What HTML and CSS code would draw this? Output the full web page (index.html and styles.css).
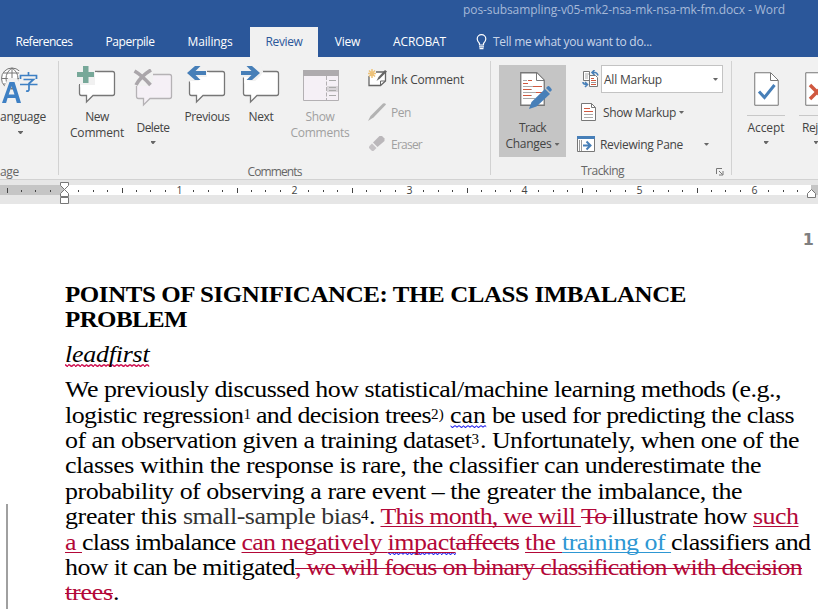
FILE: index.html
```html
<!DOCTYPE html>
<html lang="en">
<head>
<meta charset="utf-8">
<title>Word</title>
<link rel="stylesheet" href="styles.css">
<script src="fit.js" defer></script>
</head>
<body>
<svg class="defs" aria-hidden="true">
  <defs>
    <path id="bubble" d="M4.500 5.500h31q2 0 2 2v20q0 2-2 2h-19.500l-6.500 6.500v-6.500h-5q-2 0-2-2v-20q0-2 2-2z"/>
    <path id="arrow" d="M0 7l8-7h5.500l-5 5h10.500v4h-10.500l5 5h-5.500z"/>
    <path id="sheet" d="M.75.75h16l7.500 7.500v25h-23.500z"/>
  </defs>
</svg>

<header class="top">
  <div class="titlebar"><span data-w="322">pos-subsampling-v05-mk2-nsa-mk-nsa-mk-fm.docx - Word</span></div>
  <nav class="tabs">
    <a class="tab t-ref"><span data-w="57">References</span></a>
    <a class="tab t-pap"><span data-w="49">Paperpile</span></a>
    <a class="tab t-mail"><span data-w="45">Mailings</span></a>
    <a class="tab t-rev active"><span data-w="37">Review</span></a>
    <a class="tab t-view"><span data-w="25.5">View</span></a>
    <a class="tab t-acro"><span data-w="53">ACROBAT</span></a>
    <div class="tell">
      <svg width="11" height="16" viewBox="0 0 11 16" fill="none" stroke="#fff" stroke-width="1.200"><path d="M3.500 11v-1.500C2 8 1.200 7 1.200 5a4.300 4.300 0 0 1 8.600 0c0 2-.8 3-2.300 4.500V11zM3 12.800h5M3.500 14.700h4"/></svg>
      <span data-w="159">Tell me what you want to do...</span>
    </div>
  </nav>
</header>

<section class="ribbon">
  <div class="group g-lang">
    <div class="body">
      <div class="lang">
        <svg width="40" height="40" viewBox="0 0 40 40">
          <g fill="#fff" stroke="#777" stroke-width="1"><circle cx="12" cy="12.500" r="10.500"/><path fill="none" d="M12 2v21M1.500 12.500h21M3.500 7h17M3.500 18h17M12 2q-6 4-6 10.500t6 10.500M12 2q6 4 6 10.500t-6 10.500"/></g>
          <path d="M19 5h19v17H19z" fill="#f1f1f1"/>
          <path d="M1 38L10 15h5l8 23" fill="none" stroke="#f1f1f1" stroke-width="6"/>
          <path d="M2 37l7.500-21h5L21 37h-4.200l-1.400-5H7.600l-1.500 5zM8.700 28.500h5.800L11.600 20z" fill="#3e80c4" fill-rule="evenodd"/>
          <path d="M28.500 6v3M20.500 13V9.500h16V13M23.500 13.500h10l-4.500 4v6q0 2-3 1.500M20 18.500h17.500" fill="none" stroke="#3e80c4" stroke-width="1.700"/>
        </svg>
        <span class="lbl" data-w="46">anguage</span>
        <i class="caret"></i>
      </div>
    </div>
    <div class="name"><span data-w="19">age</span></div>
  </div>

  <div class="group g-comments">
    <div class="body">
      <div class="big b-new">
        <svg width="40" height="40" viewBox="0 0 40 40"><use href="#bubble" fill="#fff" stroke="#777" stroke-width="1.300"/><path d="M0 0h18v19H0z" fill="#f1f1f1"/><path d="M6 0h5.500v6H17v5h-5.500v6H6v-6H0V6h6z" fill="#77a899"/><path d="M18 5.500h1M2.500 18v2" stroke="#777"/><path d="M3.300 19h15V6.200h2v15h-17z" fill="#fff"/></svg>
        <span class="lbl" data-w="23.500">New</span><span class="lbl" data-w="54">Comment</span>
      </div>
      <div class="big b-del low off">
        <svg width="40" height="40" viewBox="0 0 40 40"><use href="#bubble" x="1" fill="#f5f0f6" stroke="#b5b2b5" stroke-width="1.300"/><path d="M0 0h20v13l-4 4H0z" fill="#f1f1f1"/><path d="M1.500 2q7 4 16 14M18 1Q8 7 3 16" fill="none" stroke="#aaa6aa" stroke-width="3.600"/></svg>
        <span class="lbl dark" data-w="33">Delete</span><i class="caret"></i>
      </div>
      <div class="big b-prev">
        <svg width="40" height="40" viewBox="0 0 40 40"><use href="#bubble" fill="#fff" stroke="#777" stroke-width="1.300"/><path d="M0 0h20v11.500h-5l-3 4H0z" fill="#f1f1f1"/><path d="M3.200 15h9l-4-4h11.500V6.200h2V17H3.200z" fill="#fff"/><use href="#arrow" fill="#477fb8"/></svg>
        <span class="lbl" data-w="45">Previous</span>
      </div>
      <div class="big b-next">
        <svg width="40" height="40" viewBox="0 0 40 40"><use href="#bubble" fill="#fff" stroke="#777" stroke-width="1.300"/><path d="M0 0h20l2 5v2l-7 8.500H6v-4H0z" fill="#f1f1f1"/><path d="M3.200 11h7l-2 4h6l6-6 2-2.800v11H3.200z" fill="#fff"/><use href="#arrow" transform="matrix(-1 0 0 1 19 0)" fill="#477fb8"/></svg>
        <span class="lbl" data-w="25">Next</span>
      </div>
      <div class="big b-show off">
        <svg width="40" height="40" viewBox="0 0 40 40"><path d="M3.500 4.500h35v30h-35z" fill="#f5f0f6" stroke="#b3b0b3"/><path d="M3 4h36v6H3z" fill="#aeabae"/><path d="M27 20h11v6H27z" fill="#d9d5d9"/><path d="M26.500 10v24" stroke="#b3b0b3" stroke-dasharray="4 1.500"/><path d="M29 14.500h7M29 21.500h7M29 24.500h7M29 29.500h7" stroke="#aaa"/></svg>
        <span class="lbl" data-w="29">Show</span><span class="lbl" data-w="59">Comments</span>
      </div>
      <div class="col ink">
        <div class="row">
          <svg width="21" height="20" viewBox="0 0 21 20"><path d="M1 7v9.500h11.500l5-4.500V3H8" fill="#fff" stroke="#666" stroke-width="1.300"/><path d="M12.500 16.500V12h5" fill="none" stroke="#666"/><path d="M4 0v9M0 4.500h8M1 1.500l6 6M7 1.500l-6 6" stroke="#edc27a" stroke-width="1.500"/><path d="M8.500 12l2-4L17 1l2 1.500L12 9.500z" fill="#666"/></svg>
          <span class="lbl" data-w="73">Ink Comment</span>
        </div>
        <div class="row off">
          <svg width="21" height="20" viewBox="0 0 21 20"><path d="M0 19l2.500-5L15 1.500q2-1 3 1L5.500 15.500z" fill="#b3b3b3"/></svg>
          <span class="lbl" data-w="20">Pen</span>
        </div>
        <div class="row off">
          <svg width="21" height="20" viewBox="0 0 21 20"><path d="M1 12.500l3-3 4.500 4.500-3 3H4L1 14z" fill="#c5c2c5"/><path d="M5 8.500L11.500 2h2.500l2.500 2.500V7L9.500 13z" fill="#bab7ba"/></svg>
          <span class="lbl" data-w="31">Eraser</span>
        </div>
      </div>
    </div>
    <div class="name"><span data-w="54">Comments</span></div>
  </div>

  <div class="group g-track">
    <div class="body">
      <div class="track">
        <svg width="34" height="40" viewBox="0 0 34 40"><use href="#sheet" fill="#fff" stroke="#777" stroke-width="1.300"/><path d="M16.500 1v7.500H24" fill="#fff" stroke="#777"/><path d="M3 8.500h4M3 14.500h18M3 17.500h9M3 20.500h15M3 23.500h9M3 26.500h12" stroke="#aaa"/><path d="M8 8.500h4M3 11.500h5M13 14.500h9M3 17.500h8M16 20.500h6M3 23.500h8" stroke="#d0583f"/><path d="M9 37l2.500-7L25 17l5 5-13.500 12.500z" fill="#477fb8"/><path d="M26 16l2-2q1.500-.5 4 4l-2 2z" fill="#477fb8"/></svg>
        <span class="lbl" data-w="27">Track</span>
        <span class="lbl two"><span data-w="46">Changes</span><i class="caret"></i></span>
      </div>
      <div class="col opts">
        <div class="row r1">
          <svg width="17" height="18" viewBox="0 0 17 18"><path d="M1.500 1.500h6v9h-6z" fill="#fff" stroke="#777"/><path d="M3 4h4M3 6h3M3 8h3" stroke="#aaa"/><path d="M7.500 5.500h6l2 2v9h-8z" fill="#fff" stroke="#777"/><path d="M9 8.500h3M9 10.500h5M9 14.500h5" stroke="#d0583f"/><path d="M9 12.500h5" stroke="#999"/><path d="M10 2.500h3q2 0 3 3M12.500 0L10 2.500 12.500 5M1 12q0 2.500 4 2.500M3 12l2.500 2.500L3 17" fill="none" stroke="#477fb8" stroke-width="1.600"/></svg>
          <div class="select"><span class="lbl" data-w="58">All Markup</span><i class="caret"></i></div>
        </div>
        <div class="row r2">
          <svg width="16" height="19" viewBox="0 0 16 19"><path d="M.5.5h10l4 4v13H.5z" fill="#fff" stroke="#777"/><path d="M10.500.5v4h4" fill="none" stroke="#777"/><path d="M3 5.500h6M3 8.500h9" stroke="#d0583f"/><path d="M3 11.500h9M3 14.500h9" stroke="#aaa"/></svg>
          <span class="lbl" data-w="73">Show Markup</span><i class="caret"></i>
        </div>
        <div class="row r3">
          <svg width="18" height="17" viewBox="0 0 18 17"><path d="M.5.5h17v15H.5z" fill="#fff" stroke="#777"/><path d="M0 0h18v3H0z" fill="#477fb8"/><path d="M2.500 4v11M4.500 4v11" stroke="#999"/><path d="M6 9.500h7M9.500 5.500l4 4-4 4" fill="none" stroke="#477fb8" stroke-width="2"/></svg>
          <span class="lbl" data-w="83">Reviewing Pane</span><i class="caret"></i>
        </div>
      </div>
    </div>
    <div class="name"><span data-w="43">Tracking</span>
      <svg width="8" height="8" viewBox="0 0 8 8" fill="none" stroke="#777"><path d="M.5 6V.5H6M3 3l3.500 3.500M7 3v4H3"/></svg>
    </div>
  </div>

  <div class="group g-changes">
    <div class="body">
      <div class="chg">
        <svg width="25" height="34" viewBox="0 0 25 34"><use href="#sheet" fill="#fff" stroke="#777"/><path d="M16.500 1v7.500H24" fill="none" stroke="#777"/><path d="M5 19.500l5.500 6L20.500 13" fill="none" stroke="#477fb8" stroke-width="3"/></svg>
        <hr><span class="lbl" data-w="37">Accept</span><i class="caret"></i>
      </div>
      <div class="chg rej">
        <svg width="13" height="34" viewBox="0 0 13 34"><use href="#sheet" fill="#fff" stroke="#777"/><path d="M5 13l14 14M5 27l14-14" fill="none" stroke="#d0583f" stroke-width="3.500"/></svg>
        <hr><span class="lbl" data-w="16">Rej</span><i class="caret"></i>
      </div>
    </div>
  </div>
</section>

<div class="ruler">
  <svg id="ruler" width="818" height="24" viewBox="0 0 818 24">
    <path d="M0 5h64v10H0zM811 5h7v10h-7z" fill="#c5c5c5"/><path d="M64 5h747v10H64z" fill="#fff"/>
    <g id="ticks" stroke="#444"></g>
    <g fill="#fff" stroke="#777"><path d="M60.500 2.500h8v3l-4 4-4-4zM60.500 16.500v-3l4-4 4 4v3zM60.500 17.500h8v6h-8zM807.500 17.500v-4l4-4 4 4v4z"/></g>
  </svg>
</div>

<main class="page">
  <div class="pageno">1</div>
  <h1 class="heading">
    <span class="line"><span data-w="621">POINTS OF SIGNIFICANCE: THE CLASS IMBALANCE</span></span>
    <span class="line"><span data-w="122">PROBLEM</span></span>
  </h1>
  <p class="lead"><span class="line"><span class="squig red" data-w="84.500">leadfirst</span></span></p>
  <div class="para">
    <div class="line"><span data-w="716">We previously discussed how statistical/machine learning methods (e.g.,</span></div>
    <div class="line"><span data-w="178.500">logistic regression</span><sup data-w="6.500">1</sup><span data-w="181"> and decision trees</span><sup data-w="13">2)</sup><span data-w="6"> </span><span class="squig blue" data-w="36">can</span><span data-w="308"> be used for predicting the class</span></div>
    <div class="line"><span data-w="406.500">of an observation given a training dataset</span><sup data-w="8.500">3</sup><span data-w="319">. Unfortunately, when one of the</span></div>
    <div class="line"><span data-w="696">classes within the response is rare, the classifier can underestimate the</span></div>
    <div class="line"><span data-w="677">probability of observing a rare event – the greater the imbalance, the</span></div>
  </div>
  <div class="para changed">
    <div class="line"><span data-w="118">greater this </span><span class="soft" data-w="178">small-sample bias</span><sup data-w="8">4</sup><span data-w="11">. </span><ins data-w="200">This month, we will </ins><del data-w="31">To </del><span data-w="141">illustrate how </span><ins data-w="45.500">such</ins></div>
    <div class="line"><ins data-w="17">a </ins><span data-w="159.500">class imbalance </span><ins data-w="146">can negatively </ins><ins class="squig blue" data-w="68">impact</ins><del data-w="63.500">affects</del><span data-w="6"> </span><ins data-w="37">the </ins><ins class="other" data-w="109">training of </ins><span data-w="139.500">classifiers and</span></div>
    <div class="line"><span data-w="230">how it can be mitigated</span><del data-w="507">, we will focus on binary classification with decision</del></div>
    <div class="line"><del data-w="48">trees</del><span data-w="6">.</span></div>
  </div>
</main>
</body>
</html>
```
FILE: styles.css
```css
* { box-sizing: border-box; }
html, body { margin: 0; height: 609px; overflow: hidden; }
body {
  background: #fff;
  font: 12px/16px "Open Sans", "Noto Sans", sans-serif;
  color: #444;
}
[data-w] { white-space: pre; }
svg { display: block; flex: none; overflow: hidden; }
.defs { display: none; }

/* title bar and tabs */
.top { height: 57px; background: #2b579a; }
.titlebar { height: 27px; padding: 2px 33px 0 0; text-align: right; color: #a6b9d8; }
.tabs { display: flex; height: 30px; color: #fff; }
.tab { display: flex; justify-content: center; align-items: center; }
.t-ref { width: 88px; }
.t-pap { width: 84px; }
.t-mail { width: 76px; margin-right: 2px; }
.t-rev { width: 68px; }
.t-view { width: 59px; }
.t-acro { width: 85px; }
.tab.active { background: #f1f1f1; color: #2b579a; }
.tell { display: flex; align-items: center; gap: 6px; padding-left: 14px; color: #c8d4e8; }

/* ribbon */
.ribbon { display: flex; height: 123px; background: #f1f1f1; border-bottom: 1px solid #d2d2d2; overflow: hidden; }
.group { flex: none; height: 114px; margin-top: 4px; border-right: 1px solid #d2d2d2; }
.g-lang { width: 59px; }
.g-comments { width: 432px; }
.g-track { width: 241px; }
.g-changes { width: 86px; border: 0; }
.body { display: flex; height: 102px; }
.name { display: flex; justify-content: center; height: 16px; line-height: 18px; color: #666; }
.g-lang .name { justify-content: flex-start; }
.caret { display: block; flex: none; width: 5px; height: 3px; background: #666; clip-path: polygon(0 0, 100% 0, 100% 20%, 60% 100%, 40% 100%, 0 20%); }
.lbl { display: block; height: 16px; line-height: 16px; transform: translateY(1px); }
.off .lbl { color: #a0a0a0; }
.off .lbl.dark { color: #444; }

.lang { width: 46px; padding-top: 5px; }
.lang svg { margin: 0 0 2px; }
.lang .caret { margin: 7px 0 0 18px; }
.g-comments .body { padding-left: 8px; }
.big { display: flex; flex-direction: column; align-items: center; padding-top: 5px; }
.big svg { margin-bottom: 2px; }
.big.low { padding-top: 8px; }
.big.low svg { margin-bottom: 10px; }
.big .caret { margin-top: 6px; }
.b-new { width: 60px; }
.b-del { width: 52px; }
.b-prev { width: 56px; }
.b-next { width: 52px; }
.b-show { width: 66px; }
.col { display: flex; flex-direction: column; padding-top: 2px; }
.row { display: flex; align-items: center; height: 32px; }
.row:nth-child(2) { margin-top: 1px; }
.ink { margin-left: 15px; }
.ink .row { gap: 2px; }

.g-track .body { padding-left: 8px; }
.track { display: flex; flex-direction: column; align-items: center; width: 67px; height: 92px; margin-top: 4px; padding-top: 7px; background: #c5c5c5; }
.track svg { margin: 0 0 7px 8px; }
.two { display: flex; align-items: center; gap: 3px; }
.opts { padding-left: 11px; }
.r1 { padding-left: 5px; gap: 2px; }
.select { display: flex; align-items: center; justify-content: space-between; width: 122px; height: 28px; padding: 0 4px 0 2px; background: #fff; border: 1px solid #c3c3c3; }
.r2 { padding-left: 4px; }
.r2 .lbl { margin: 0 3px 0 6px; }
.r3 .lbl { margin: 0 21px 0 5px; }
.g-track .name { justify-content: flex-start; align-items: center; padding-left: 90px; }
.g-track .name svg { margin: 2px 0 0 92px; }

.g-changes .body { padding-left: 15px; gap: 14px; }
.chg { display: flex; flex: none; flex-direction: column; align-items: center; width: 38px; padding-top: 11px; }
.chg hr { width: 38px; height: 1px; margin: 9px 0 3px; border: 0; background: #c8c8c8; }
.chg .caret { margin-top: 6px; }
.chg.rej { align-items: flex-start; width: 19px; }
.chg.rej hr { width: 19px; }
.rej svg { margin-left: 6px; }
.rej .lbl { margin-left: 3px; }
.rej .caret { width: 4px; margin-left: 15px; }

/* ruler */
.ruler { height: 24px; background: #e6e6e6; }
.ruler text { font-size: 10.500px; fill: #444; stroke: none; text-anchor: middle; }

/* document */
.page { height: 405px; overflow: hidden; color: #000; font: 24px/25.400px "Liberation Serif", serif; }
.pageno { height: 78px; padding: 23px 4px 0 0; text-align: right; font: bold 16px/25px "DejaVu Sans", sans-serif; color: #7f7f7f; }
.heading { margin: 0 0 9.200px 65px; font-size: 24px; font-weight: bold; }
.lead { margin: 0 0 9.800px 65px; font-style: italic; }
.line { display: block; width: 690px; height: 25.400px; white-space: nowrap; transform: scaleX(1.080); transform-origin: 0 0; }
.heading .line { transform: scaleX(1.040); }
.para { padding-left: 65px; }
.changed { margin-left: 6px; padding: 0 0 8px 57px; border-left: 2px solid #a0a0a0; }
.soft { color: #333; }
sup { font-size: 14px; line-height: 0; vertical-align: 4px; }
ins, del { color: #b30838; text-decoration-thickness: 1px; text-decoration-skip-ink: none; }
ins { text-underline-offset: 2px; }
.other { color: #2e97d3; }
.squig { background: 0 100% / 4px 3px repeat-x; }
.red { background-image: url("data:image/svg+xml,%3Csvg xmlns='http://www.w3.org/2000/svg' width='4' height='3'%3E%3Cpath d='M0 .5L2 2.500 4 .5' fill='none' stroke='%23d01050' stroke-width='1.300'/%3E%3C/svg%3E"); }
.blue { background-image: url("data:image/svg+xml,%3Csvg xmlns='http://www.w3.org/2000/svg' width='4' height='3'%3E%3Cpath d='M0 .5L2 2.500 4 .5' fill='none' stroke='%232222ee'/%3E%3C/svg%3E"); }
```
FILE: fit.js
```js
// Track each text run out to its set width. Document lines are stretched by
// a transform, so their spacing is worked out before the stretch.
document.querySelectorAll('[data-w]').forEach(function (el) {
  var range = document.createRange();
  range.selectNodeContents(el);
  var natural = range.getBoundingClientRect().width;
  var k = el.closest('.heading') ? 1.04 : el.closest('.line') ? 1.08 : 1;
  el.style.letterSpacing = (el.dataset.w - natural) / k / el.textContent.length + 'px';
});

// Ruler: eighth-inch ticks, a longer one each half inch, a number each inch.
var ns = 'http://www.w3.org/2000/svg';
var ticks = document.getElementById('ticks');
for (var i = -4; i < 52; i++) {
  var x = Math.floor(64.5 + i * 14.375) + 0.5;
  if (i === 0) continue;
  if (i % 8 === 0) {
    var t = document.createElementNS(ns, 'text');
    t.setAttribute('x', x);
    t.setAttribute('y', 14);
    t.textContent = i / 8;
    ticks.appendChild(t);
  } else {
    var p = document.createElementNS(ns, 'path');
    p.setAttribute('d', 'M' + x + (i % 4 === 0 ? ' 8v5' : ' 10v2'));
    ticks.appendChild(p);
  }
}
```
